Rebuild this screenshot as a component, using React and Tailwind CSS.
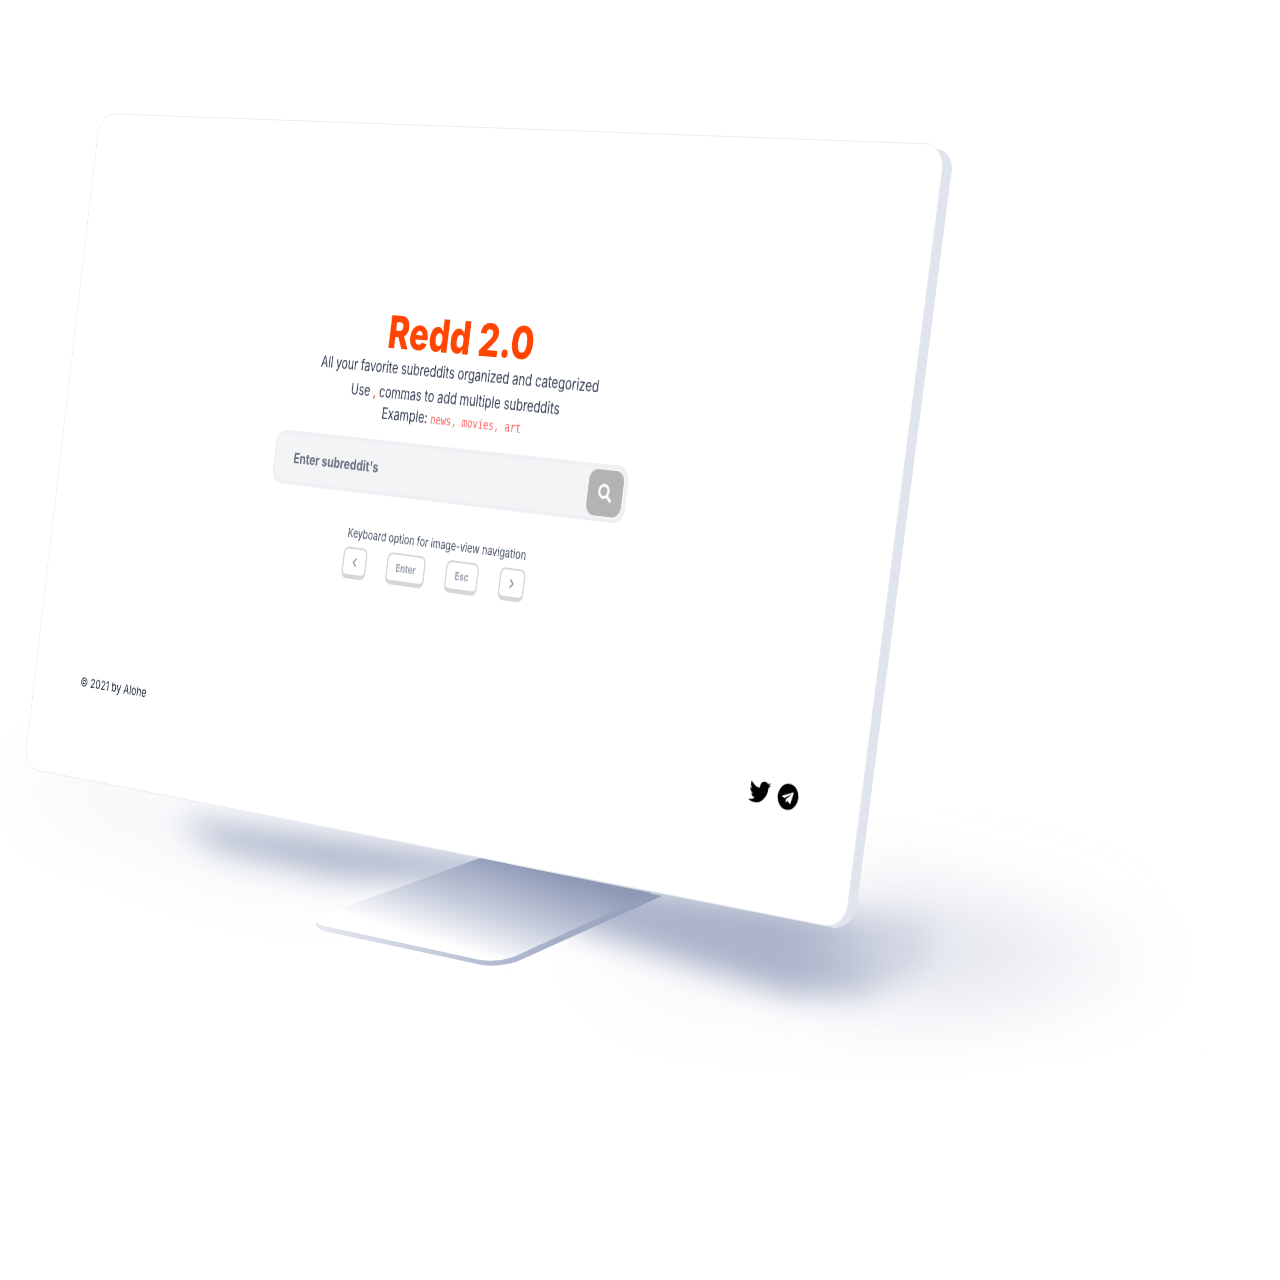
import React from "react";
import { ChevronLeft, ChevronRight } from "lucide-react";
import { FaTwitter, FaTelegram, FaSearch } from "react-icons/fa";

const SCREEN_W = 1280;
const SCREEN_H = 800;

// Corners of the screen on the canvas: top-left, top-right, bottom-right, bottom-left
const CORNERS = [
  [100, 113],
  [946, 144],
  [845, 930],
  [24, 768],
];

// Maps the flat screen onto the four corners above
const getScreenMatrix = (w, h, pts) => {
  const [[x0, y0], [x1, y1], [x2, y2], [x3, y3]] = pts;
  const dx1 = x1 - x2;
  const dx2 = x3 - x2;
  const dx3 = x0 - x1 + x2 - x3;
  const dy1 = y1 - y2;
  const dy2 = y3 - y2;
  const dy3 = y0 - y1 + y2 - y3;
  const den = dx1 * dy2 - dx2 * dy1;
  const g = (dx3 * dy2 - dx2 * dy3) / den;
  const k = (dx1 * dy3 - dx3 * dy1) / den;
  const a = x1 - x0 + g * x1;
  const b = x3 - x0 + k * x3;
  const d = y1 - y0 + g * y1;
  const e = y3 - y0 + k * y3;
  return `matrix3d(${a / w},${d / w},0,${g / w},${b / h},${e / h},0,${k / h},0,0,1,0,${x0},${y0},0,1)`;
};

const Key = ({ children, className }) => (
  <div
    className={`flex h-9 items-center justify-center rounded-lg border-2 border-b-[5px] border-[#d6d6d6] bg-white text-xs font-bold text-gray-400 ${className}`}
  >
    {children}
  </div>
);

const Backdrop = () => (
  <svg className="absolute left-0 top-0" width="1280" height="1280" viewBox="0 0 1280 1280">
    <defs>
      <filter id="blurWide" x="-30%" y="-60%" width="160%" height="220%">
        <feGaussianBlur stdDeviation="40" />
      </filter>
      <filter id="blurMid" x="-30%" y="-60%" width="160%" height="220%">
        <feGaussianBlur stdDeviation="15" />
      </filter>
      <linearGradient id="standTop" gradientUnits="userSpaceOnUse" x1="518" y1="862" x2="488" y2="958">
        <stop offset="0" stopColor="#8e99b6" />
        <stop offset="0.55" stopColor="#c6ccdc" />
        <stop offset="1" stopColor="#ffffff" />
      </linearGradient>
      <linearGradient id="standEdge" gradientUnits="userSpaceOnUse" x1="316" y1="925" x2="660" y2="895">
        <stop offset="0" stopColor="#e6e9f0" />
        <stop offset="0.5" stopColor="#b4bcd2" />
        <stop offset="1" stopColor="#8f9ab7" />
      </linearGradient>
    </defs>

    {/* faint ambient shadow */}
    <path d="M30 760 L300 820 L420 880 L250 880 L30 800 Z" fill="#f3f4f8" filter="url(#blurWide)" />
    <path d="M560 950 L850 985 L1160 930 L1130 990 L900 1025 L650 1000 Z" fill="#f4f5f8" filter="url(#blurWide)" />
    {/* floor shadows */}
    <path d="M175 818 L500 858 L500 888 L340 878 L220 850 Z" fill="#afb7cc" filter="url(#blurMid)" />
    <path d="M540 870 L860 915 L930 925 L930 960 L860 995 L790 995 L680 962 L570 925 Z" fill="#acb4ca" filter="url(#blurMid)" />
    <path d="M850 880 L1040 925 L1100 945 L1000 985 L850 995 Z" fill="#dfe2eb" filter="url(#blurWide)" />

    {/* stand */}
    <path
      d="M480 860 L662 896 L525 958 Q505 968 482 965 L324 931 Q315 928 316 922 L320 925 Z"
      fill="url(#standEdge)"
    />
    <path
      d="M480 858 L652 893 L518 955 Q500 963 480 960 L324 926 Q314 923 318 919 Q320 916 326 914 Z"
      fill="url(#standTop)"
    />

    {/* screen side */}
    <path
      d="M938 149 Q951 152 952 168 L857 905 Q853 928 832 928 L800 900 L900 160 Z"
      fill="#e0e5ed"
    />
  </svg>
);

export default function App() {
  return (
    <div className="relative h-[1280px] w-[1280px] overflow-hidden bg-white font-['Inter',sans-serif]">
      <Backdrop />

      <div
        className="absolute left-0 top-0 flex origin-top-left flex-col overflow-hidden rounded-[26px] border border-[#e8ebf2] bg-white blur-[0.3px]"
        style={{
          width: SCREEN_W,
          height: SCREEN_H,
          transform: getScreenMatrix(SCREEN_W, SCREEN_H, CORNERS),
        }}
      >
        <main className="flex flex-col items-center pl-1.5 pt-[205px]">
          <h1 className="text-[51px] font-extrabold leading-[56px] text-[#ff4500]">Redd 2.0</h1>
          <p className="text-[16.7px] leading-6 text-gray-700">
            All your favorite subreddits organized and categorized
          </p>
          <p className="mt-1 text-[16.7px] leading-6 text-gray-700">
            Use <span className="text-red-500">,</span> commas to add multiple subreddits
          </p>
          <p className="text-[16.7px] leading-6 text-gray-700">
            Example:{" "}
            <code className="font-['DejaVu_Sans_Mono',monospace] text-[13.5px] text-red-400">news, movies, art</code>
          </p>

          <div className="mt-[17px] flex h-[62px] w-[544px] items-center justify-between rounded-2xl border-4 border-[#eef0f3] bg-[#f3f4f6] pl-7 pr-0.5">
            <span className="text-[16.4px] font-bold text-gray-500">Enter subreddit's</span>
            <div className="flex h-[50px] w-[50px] items-center justify-center rounded-xl bg-[#b3b3b3]">
              <FaSearch className="h-5 w-5 text-white" />
            </div>
          </div>

          <p className="mt-9 text-[13.6px] leading-5 text-gray-600">Keyboard option for image-view navigation</p>
          <div className="mt-1.5 flex items-center gap-8">
            <Key className="w-[38px]"><ChevronLeft className="h-4 w-4" strokeWidth={3} /></Key>
            <Key className="w-[60px]">Enter</Key>
            <Key className="w-[50px]">Esc</Key>
            <Key className="w-[38px]"><ChevronRight className="h-4 w-4" strokeWidth={3} /></Key>
          </div>
        </main>

        <footer className="mt-auto flex items-start justify-between pb-[105px] pl-[83px] pr-[80px]">
          <span className="mt-3 text-[15px] leading-5 text-gray-800">© 2021 by Alohe</span>
          <div className="flex items-center gap-2.5 text-black">
            <FaTwitter className="h-7 w-7" />
            <FaTelegram className="h-7 w-7" />
          </div>
        </footer>
      </div>
    </div>
  );
}
